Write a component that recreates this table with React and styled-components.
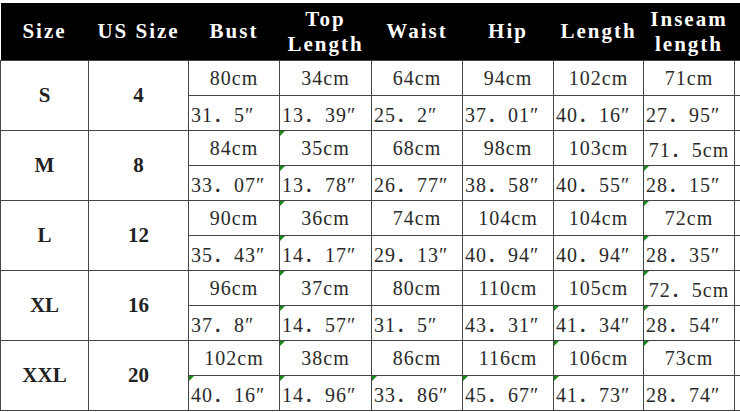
import React from 'react'
import styled, { createGlobalStyle } from 'styled-components'

const rows = [
    { size: 'S', us: '4', cm: ['80cm', '34cm', '64cm', '94cm', '102cm', '71cm'], inch: ['31．5″', '13．39″', '25．2″', '37．01″', '40．16″', '27．95″'] },
    { size: 'M', us: '8', cm: ['84cm', '35cm', '68cm', '98cm', '103cm', '71．5cm'], inch: ['33．07″', '13．78″', '26．77″', '38．58″', '40．55″', '28．15″'] },
    { size: 'L', us: '12', cm: ['90cm', '36cm', '74cm', '104cm', '104cm', '72cm'], inch: ['35．43″', '14．17″', '29．13″', '40．94″', '40．94″', '28．35″'] },
    { size: 'XL', us: '16', cm: ['96cm', '37cm', '80cm', '110cm', '105cm', '72．5cm'], inch: ['37．8″', '14．57″', '31．5″', '43．31″', '41．34″', '28．54″'] },
    { size: 'XXL', us: '20', cm: ['102cm', '38cm', '86cm', '116cm', '106cm', '73cm'], inch: ['40．16″', '14．96″', '33．86″', '45．67″', '41．73″', '28．74″'] },
]

// little green "number as text" markers, row-sub-col
const flags = new Set([
    '1-0-1', '1-1-1', '1-1-5',
    '2-0-1', '2-1-1', '2-0-5', '2-1-5',
    '3-0-1', '3-1-1', '3-0-5', '3-1-5', '3-1-4',
    '4-0-1', '4-1-1', '4-1-0', '4-0-4', '4-1-4', '4-1-2', '4-1-3', '4-0-5',
])

const widths = [88, 100, 91, 92, 91, 91, 90, 91, 90]

function App() {
    return (
        <>
            <GlobalStyle />
            <Sheet>
                <colgroup>
                    {widths.map((w, i) => <col key={i} style={{ width: w }} />)}
                </colgroup>
                <thead>
                    <tr>
                        <HeadCell>Size</HeadCell>
                        <HeadCell>US Size</HeadCell>
                        <HeadCell>Bust</HeadCell>
                        <HeadCell>Top<br />Length</HeadCell>
                        <HeadCell>Waist</HeadCell>
                        <HeadCell>Hip</HeadCell>
                        <HeadCell>Length</HeadCell>
                        <HeadCell>Inseam<br />length</HeadCell>
                        <HeadCell />
                    </tr>
                </thead>
                <tbody>
                    {rows.map((r, ri) => (
                        <React.Fragment key={r.size}>
                            <tr>
                                <SizeCell rowSpan={2}>{r.size}</SizeCell>
                                <SizeCell rowSpan={2}>{r.us}</SizeCell>
                                {r.cm.map((v, ci) => (
                                    <Cell key={ci} $flag={flags.has(`${ri}-0-${ci}`)}>{v}</Cell>
                                ))}
                                <Cell />
                            </tr>
                            <tr>
                                {r.inch.map((v, ci) => (
                                    <Cell key={ci} $inch $flag={flags.has(`${ri}-1-${ci}`)}>{v}</Cell>
                                ))}
                                <Cell />
                            </tr>
                        </React.Fragment>
                    ))}
                </tbody>
            </Sheet>
        </>
    )
}

export default App

const GlobalStyle = createGlobalStyle`
    body {
        margin: 0;
        background: #fff;
        overflow: hidden;
    }
`

const Sheet = styled.table`
    margin-top: 3px;
    table-layout: fixed;
    width: 824px;
    border-collapse: collapse;
    font-family: "Liberation Serif", "Noto Sans CJK SC", serif;
    color: #2a2a2a;
`

const HeadCell = styled.th`
    height: 57px;
    padding: 0;
    background: #000;
    color: #fff;
    font-size: 21px;
    font-weight: 700;
    line-height: 25px;
    letter-spacing: 2px;
    text-align: center;
    white-space: nowrap;
    overflow: hidden;
`

const SizeCell = styled.td`
    border: 1px solid #444;
    padding: 0;
    text-align: center;
    font-size: 21px;
    font-weight: 700;
    color: #222;
`

const Cell = styled.td`
    position: relative;
    height: 34px;
    border: 1px solid #444;
    padding: 0 ${p => (p.$inch ? '0 0 2px' : '0')};
    text-align: ${p => (p.$inch ? 'left' : 'center')};
    font-size: 20px;
    letter-spacing: 1px;
    white-space: nowrap;
    overflow: hidden;
    &::before {
        content: '';
        display: ${p => (p.$flag ? 'block' : 'none')};
        position: absolute;
        left: 0;
        top: 0;
        border-top: 5px solid #1a8a1a;
        border-right: 5px solid transparent;
    }
`
